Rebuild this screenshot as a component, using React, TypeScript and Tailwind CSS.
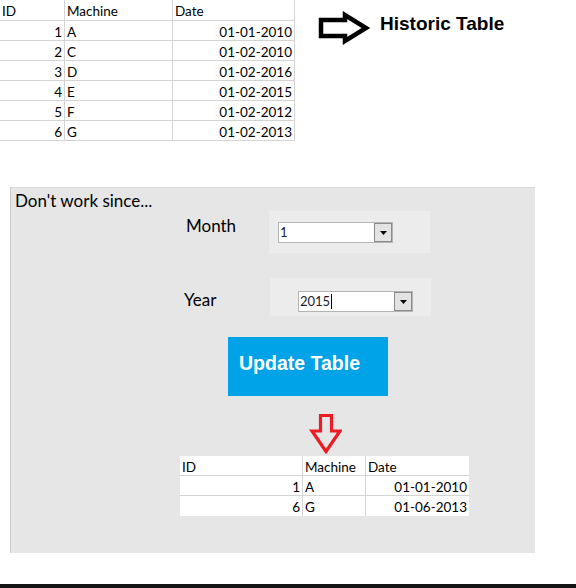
const historic = [
  { id: 1, machine: 'A', date: '01-01-2010' },
  { id: 2, machine: 'C', date: '01-02-2010' },
  { id: 3, machine: 'D', date: '01-02-2016' },
  { id: 4, machine: 'E', date: '01-02-2015' },
  { id: 5, machine: 'F', date: '01-02-2012' },
  { id: 6, machine: 'G', date: '01-02-2013' },
]

const result = [
  { id: 1, machine: 'A', date: '01-01-2010' },
  { id: 6, machine: 'G', date: '01-06-2013' },
]

const cell = 'border-r border-b border-[#d4d4d4] px-[2px] pt-[2px] leading-[18px] whitespace-nowrap'

function DropButton() {
  return (
    <div className="w-[18px] h-full bg-[#e3e3e3] border border-[#8a8a8a] flex items-center justify-center">
      <svg width="7" height="4" viewBox="0 0 7 4">
        <polygon points="0,0 7,0 3.5,4" fill="#000" />
      </svg>
    </div>
  )
}

function Select({ value, caret }: { value: string; caret?: boolean }) {
  return (
    <div className="w-[115px] h-[21px] bg-white border border-[#b5b5b5] flex">
      <div className="flex-1 flex items-center pl-[1px] text-[13px] text-[#1a1a2e]">
        {value}
        {caret && <span className="w-px h-[15px] bg-black ml-px" />}
      </div>
      <DropButton />
    </div>
  )
}

export default function App() {
  return (
    <div
      className="w-[576px] h-[588px] bg-white flex flex-col overflow-hidden text-black"
      style={{ fontFamily: 'Lato, "Open Sans", sans-serif' }}
    >
      {/* Historic table + label */}
      <div className="flex h-[141px] shrink-0">
        <div className="grid grid-cols-[65px_108px_122px] text-[13.5px] h-fit">
          <div className={`${cell} h-[21px]`}>ID</div>
          <div className={`${cell} h-[21px]`}>Machine</div>
          <div className={`${cell} h-[21px]`}>Date</div>
          {historic.map((r) => (
            <div key={r.id} className="contents">
              <div className={`${cell} h-[20px] text-right`}>{r.id}</div>
              <div className={`${cell} h-[20px]`}>{r.machine}</div>
              <div className={`${cell} h-[20px] text-right`}>{r.date}</div>
            </div>
          ))}
        </div>
        <svg className="ml-[22px] mt-[11px]" width="56" height="36" viewBox="0 0 56 36">
          <polygon
            points="4,9 28,9 28,4 49,17 28,30 28,25 4,25"
            fill="none"
            stroke="#000"
            strokeWidth="4.5"
            strokeLinejoin="miter"
          />
        </svg>
        <div
          className="ml-[7px] mt-[12px] text-[19px] font-bold leading-[24px]"
          style={{ fontFamily: '"Liberation Sans", Arial, sans-serif' }}
        >
          Historic Table
        </div>
      </div>

      {/* Form panel */}
      <div className="ml-[10px] mt-[46px] w-[525px] h-[366px] shrink-0 bg-[#e6e6e6] border-l border-t border-l-[#c9c9c9] border-t-[#d9d9d9] flex flex-col">
        <div className="pl-[4px] mt-[1px] text-[17px] leading-[23px]">Don't work since...</div>

        <div className="flex h-[42px] -mt-[1px]">
          <div className="ml-[175px] w-[83px] mt-[3px] text-[17px] leading-[23px]">Month</div>
          <div className="w-[161px] h-[42px] bg-[#ececec] pl-[9px] pt-[11px]">
            <Select value="1" />
          </div>
        </div>

        <div className="flex h-[38px] mt-[25px]">
          <div className="ml-[173px] w-[86px] mt-[10px] text-[17px] leading-[23px]">Year</div>
          <div className="w-[161px] h-[38px] bg-[#ececec] pl-[28px] pt-[13px]">
            <Select value="2015" caret />
          </div>
        </div>

        <div
          className="ml-[217px] mt-[21px] w-[160px] h-[59px] bg-[#00a2e8] text-white font-bold text-[19.5px] pl-[11px] pt-[14px] leading-[24px]"
          style={{ fontFamily: '"Liberation Sans", Arial, sans-serif' }}
        >
          Update Table
        </div>

        <svg className="ml-[295px] mt-[18px]" width="36" height="40" viewBox="0 0 36 40">
          <polygon
            points="14.5,1.5 25.5,1.5 25.5,17 34,17 20,37.5 6,17 14.5,17"
            fill="none"
            stroke="#ed1c24"
            strokeWidth="3.2"
          />
        </svg>

        <div className="ml-[169px] mt-[2px] grid grid-cols-[123px_63px_103px] text-[13.5px] w-fit bg-white">
          <div className={`${cell} h-[20px]`}>ID</div>
          <div className={`${cell} h-[20px]`}>Machine</div>
          <div className="h-[20px] border-b border-[#d4d4d4] px-[2px] pt-[2px] leading-[18px]">Date</div>
          {result.map((r, i) => (
            <div key={r.id} className="contents">
              <div className={`${cell} h-[20px] text-right ${i === result.length - 1 ? 'border-b-0' : ''}`}>{r.id}</div>
              <div className={`${cell} h-[20px] ${i === result.length - 1 ? 'border-b-0' : ''}`}>{r.machine}</div>
              <div
                className={`h-[20px] px-[2px] pt-[2px] leading-[18px] text-right ${
                  i === result.length - 1 ? '' : 'border-b border-[#d4d4d4]'
                }`}
              >
                {r.date}
              </div>
            </div>
          ))}
        </div>
      </div>

      <div className="mt-[31px] h-[4px] shrink-0 bg-[#141414]" />
    </div>
  )
}
